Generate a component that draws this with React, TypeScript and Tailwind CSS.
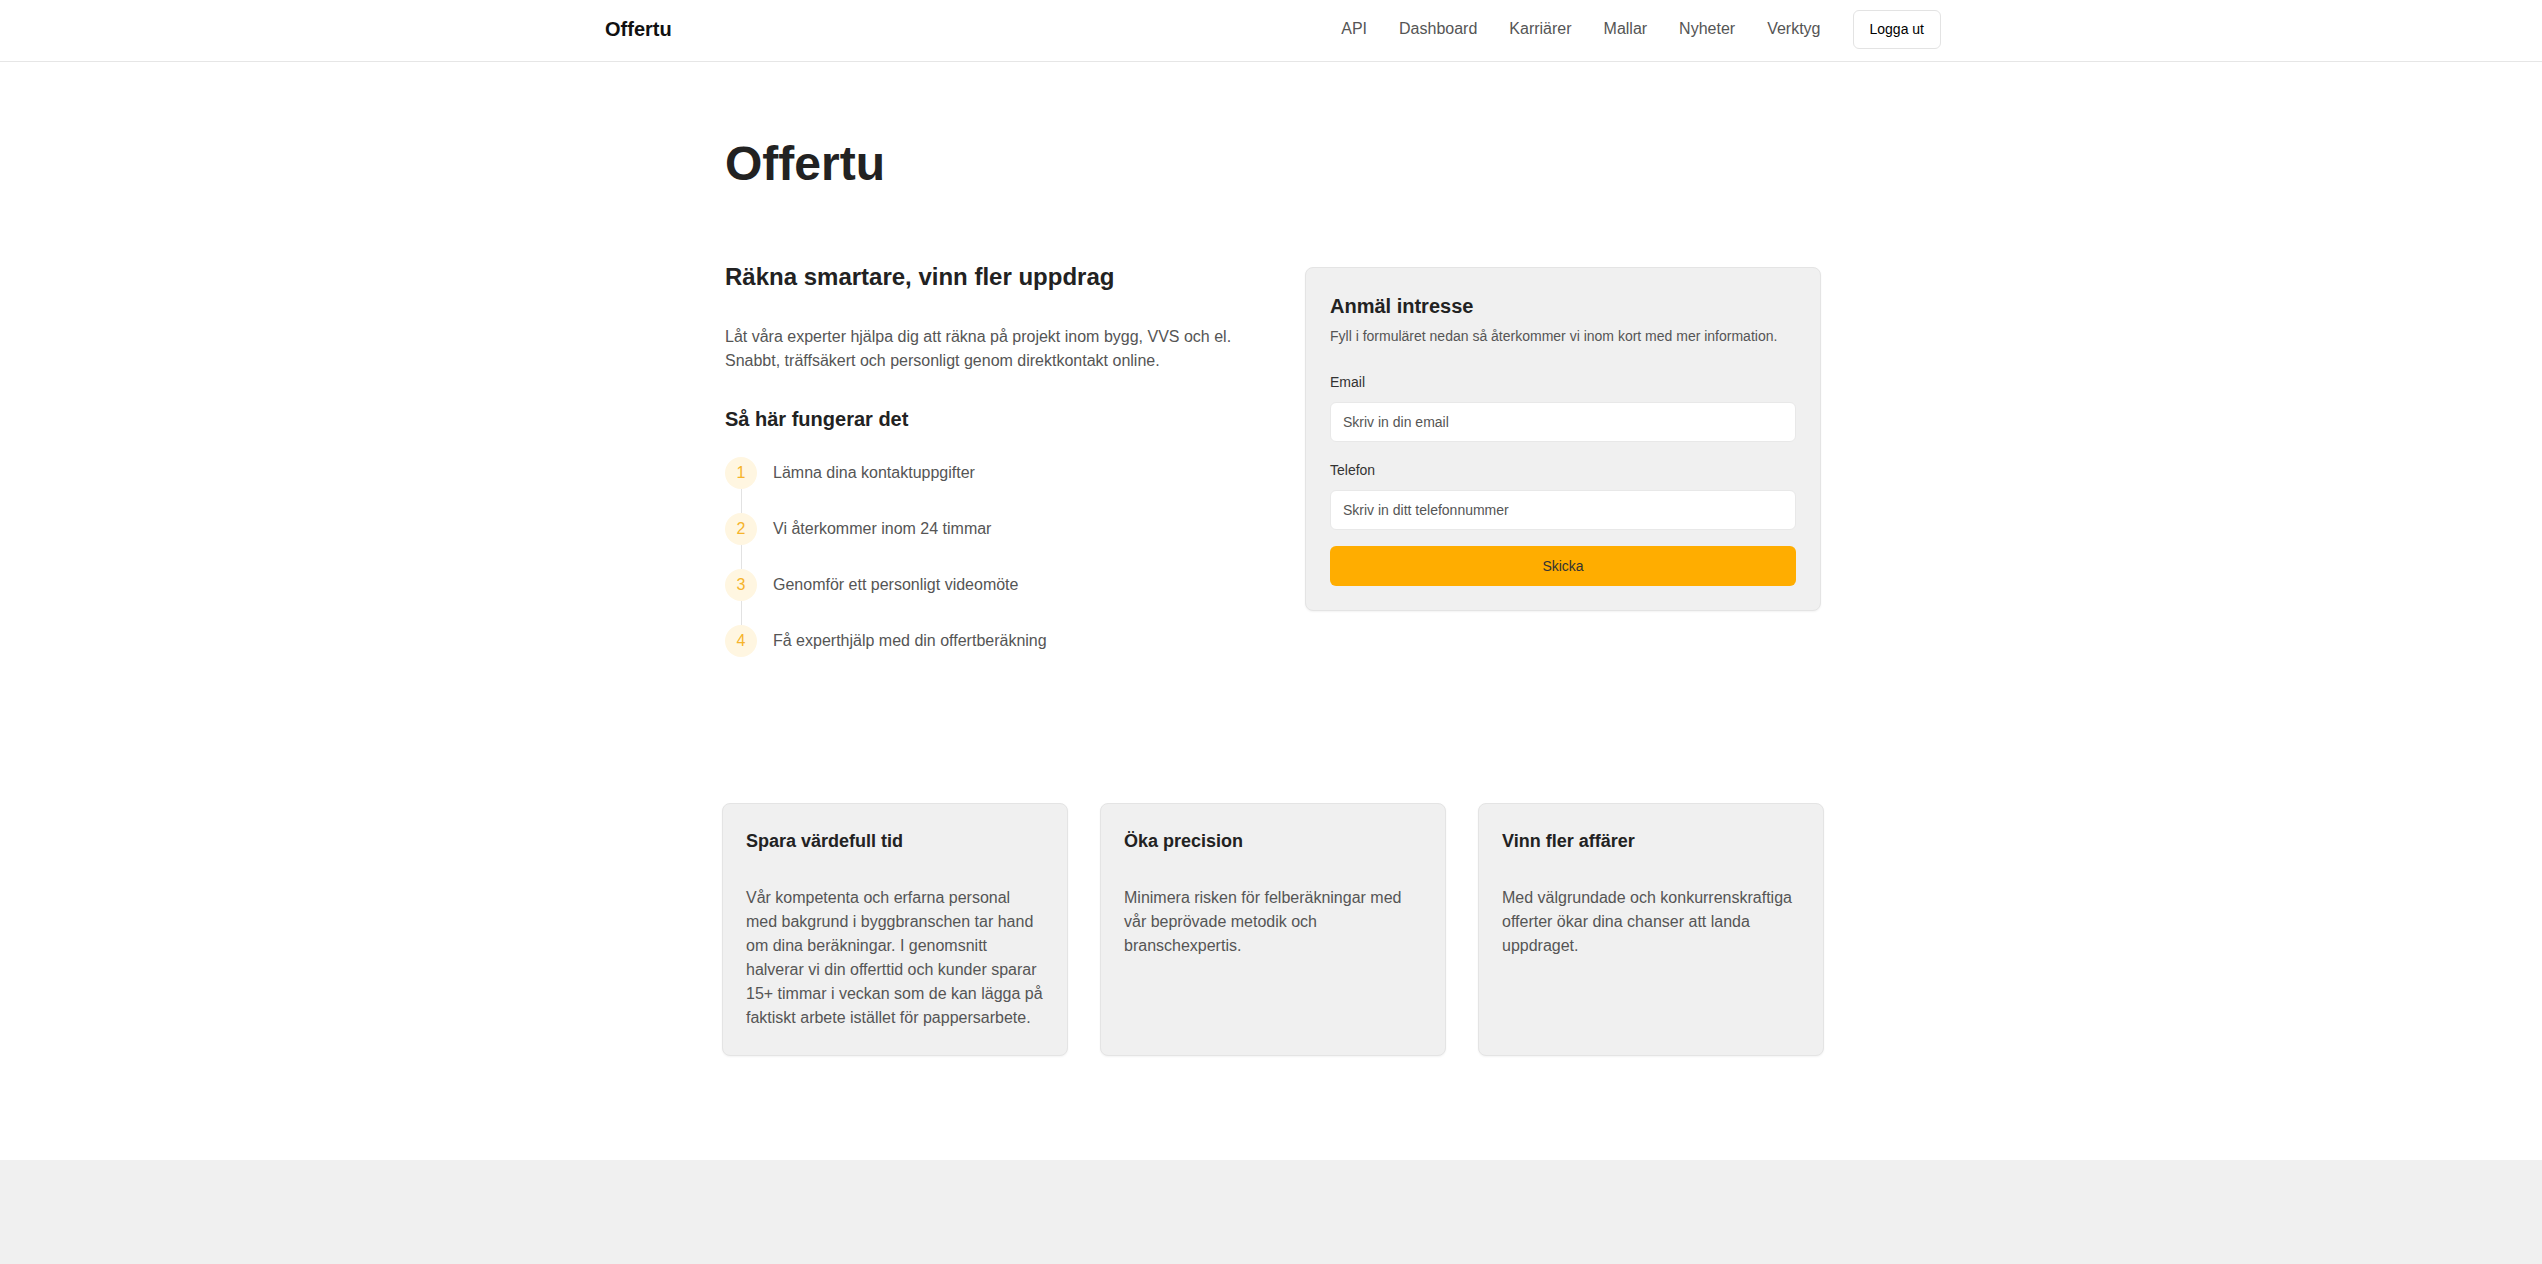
import React from 'react';

const navLinks = ['API', 'Dashboard', 'Karriärer', 'Mallar', 'Nyheter', 'Verktyg'];

const steps = [
    'Lämna dina kontaktuppgifter',
    'Vi återkommer inom 24 timmar',
    'Genomför ett personligt videomöte',
    'Få experthjälp med din offertberäkning',
];

const features = [
    {
        title: 'Spara värdefull tid',
        text: 'Vår kompetenta och erfarna personal med bakgrund i byggbranschen tar hand om dina beräkningar. I genomsnitt halverar vi din offerttid och kunder sparar 15+ timmar i veckan som de kan lägga på faktiskt arbete istället för pappersarbete.',
    },
    {
        title: 'Öka precision',
        text: 'Minimera risken för felberäkningar med vår beprövade metodik och branschexpertis.',
    },
    {
        title: 'Vinn fler affärer',
        text: 'Med välgrundade och konkurrenskraftiga offerter ökar dina chanser att landa uppdraget.',
    },
];

export default function App() {
    return (
        <div className="min-h-screen bg-white font-['Liberation_Sans',Arial,sans-serif] text-[#222]">
            {/* Header */}
            <header className="border-b border-[#e6e6e6] bg-white">
                <div className="mx-auto flex h-[61px] max-w-[1404px] items-center justify-between pr-8 pb-[3px] pl-9">
                    <a className="text-xl font-bold text-[#111]">Offertu</a>
                    <nav className="flex items-center gap-8">
                        {navLinks.map((link) => (
                            <a key={link} className="text-base text-[#555]">
                                {link}
                            </a>
                        ))}
                        <button className="flex h-[39px] items-center rounded-md border border-[#e3e3e3] bg-white px-4 text-sm text-black">
                            Logga ut
                        </button>
                    </nav>
                </div>
            </header>

            <main className="mx-auto max-w-[1108px] pt-[78px] pb-[104px] pl-1">
                {/* Hero */}
                <section className="mx-auto max-w-[1096px]">
                    <h1 className="text-5xl leading-none font-bold text-[#222]">Offertu</h1>

                    <div className="mt-[73px] grid grid-cols-2 items-start gap-16">
                        <div>
                            <h2 className="text-2xl leading-8 font-bold text-[#222]">
                                Räkna smartare, vinn fler uppdrag
                            </h2>
                            <p className="mt-8 text-base leading-6 text-[#555]">
                                Låt våra experter hjälpa dig att räkna på projekt inom bygg, VVS och el. Snabbt,
                                träffsäkert och personligt genom direktkontakt online.
                            </p>

                            <h3 className="mt-8 text-xl leading-7 font-bold text-[#222]">Så här fungerar det</h3>
                            <ol className="mt-6">
                                {steps.map((step, i) => (
                                    <li key={step} className="flex gap-4">
                                        {/* Number + connector */}
                                        <div className="flex w-8 flex-col items-center">
                                            <span className="flex h-8 w-8 items-center justify-center rounded-full bg-[#fff6e1] text-base text-[#f6b32a]">
                                                {i + 1}
                                            </span>
                                            {i < steps.length - 1 && <span className="h-6 w-px bg-[#e2e2e2]" />}
                                        </div>
                                        <span className="text-base leading-8 text-[#555]">{step}</span>
                                    </li>
                                ))}
                            </ol>
                        </div>

                        {/* Interest form */}
                        <div className="mt-[6px] rounded-lg border border-[#e4e4e4] bg-[#f0f0f0] p-6 shadow-[0_1px_2px_rgba(0,0,0,0.05)]">
                            <h2 className="text-xl leading-7 font-bold text-[#222]">Anmäl intresse</h2>
                            <p className="mt-1.5 text-sm leading-5 text-[#555]">
                                Fyll i formuläret nedan så återkommer vi inom kort med mer information.
                            </p>

                            <label className="mt-[26px] block text-sm leading-5 text-[#333]">Email</label>
                            <input
                                type="email"
                                placeholder="Skriv in din email"
                                className="mt-[10px] block h-10 w-full rounded-md border border-[#e8e8e8] bg-white px-3 text-sm text-[#333] outline-none placeholder:text-[#555]"
                            />

                            <label className="mt-[18px] block text-sm leading-5 text-[#333]">Telefon</label>
                            <input
                                type="tel"
                                placeholder="Skriv in ditt telefonnummer"
                                className="mt-[10px] block h-10 w-full rounded-md border border-[#e8e8e8] bg-white px-3 text-sm text-[#333] outline-none placeholder:text-[#555]"
                            />

                            <button className="mt-4 flex h-10 w-full items-center justify-center rounded-md bg-[#ffad00] text-sm text-[#333]">
                                Skicka
                            </button>
                        </div>
                    </div>
                </section>

                {/* Feature cards */}
                <section className="mx-auto mt-[146px] grid max-w-[1102px] grid-cols-3 gap-8">
                    {features.map((f) => (
                        <div
                            key={f.title}
                            className="rounded-lg border border-[#e4e4e4] bg-[#f0f0f0] px-[23px] pt-[23px] pb-[25px] shadow-[0_1px_2px_rgba(0,0,0,0.05)]"
                        >
                            <h3 className="text-lg leading-7 font-bold text-[#222]">{f.title}</h3>
                            <p className="mt-[31px] text-base leading-6 text-[#555]">{f.text}</p>
                        </div>
                    ))}
                </section>
            </main>

            <footer className="h-[160px] bg-[#f0f0f0]" />
        </div>
    );
}
